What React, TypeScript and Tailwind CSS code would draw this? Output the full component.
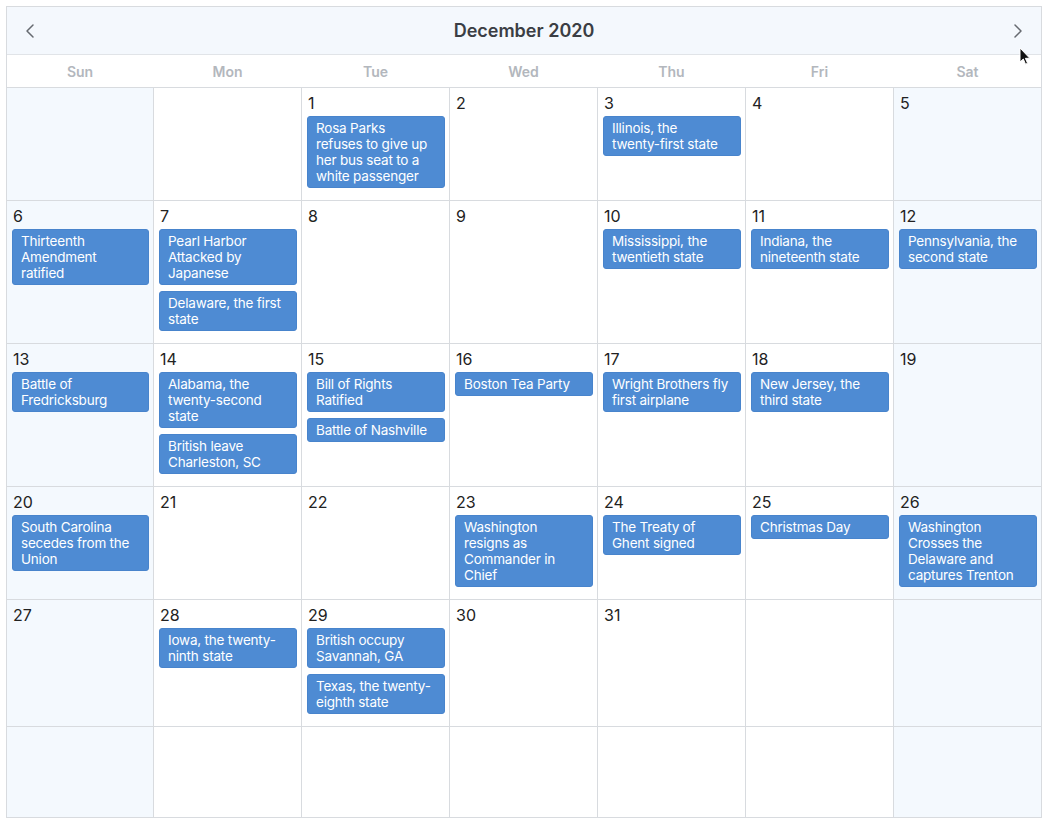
import { ChevronLeft, ChevronRight } from "lucide-react";

interface Day {
  date?: number;
  events?: string[];
}

const WEEKDAYS = ["Sun", "Mon", "Tue", "Wed", "Thu", "Fri", "Sat"];

// line breaks follow the original layout
const ROWS: { height: string; days: Day[] }[] = [
  {
    height: "h-[113px]",
    days: [
      {},
      {},
      { date: 1, events: ["Rosa Parks\nrefuses to give up\nher bus seat to a\nwhite passenger"] },
      { date: 2 },
      { date: 3, events: ["Illinois, the\ntwenty-first state"] },
      { date: 4 },
      { date: 5 },
    ],
  },
  {
    height: "h-[143px]",
    days: [
      { date: 6, events: ["Thirteenth\nAmendment\nratified"] },
      { date: 7, events: ["Pearl Harbor\nAttacked by\nJapanese", "Delaware, the first\nstate"] },
      { date: 8 },
      { date: 9 },
      { date: 10, events: ["Mississippi, the\ntwentieth state"] },
      { date: 11, events: ["Indiana, the\nnineteenth state"] },
      { date: 12, events: ["Pennsylvania, the\nsecond state"] },
    ],
  },
  {
    height: "h-[143px]",
    days: [
      { date: 13, events: ["Battle of\nFredricksburg"] },
      { date: 14, events: ["Alabama, the\ntwenty-second\nstate", "British leave\nCharleston, SC"] },
      { date: 15, events: ["Bill of Rights\nRatified", "Battle of Nashville"] },
      { date: 16, events: ["Boston Tea Party"] },
      { date: 17, events: ["Wright Brothers fly\nfirst airplane"] },
      { date: 18, events: ["New Jersey, the\nthird state"] },
      { date: 19 },
    ],
  },
  {
    height: "h-[113px]",
    days: [
      { date: 20, events: ["South Carolina\nsecedes from the\nUnion"] },
      { date: 21 },
      { date: 22 },
      { date: 23, events: ["Washington\nresigns as\nCommander in\nChief"] },
      { date: 24, events: ["The Treaty of\nGhent signed"] },
      { date: 25, events: ["Christmas Day"] },
      { date: 26, events: ["Washington\nCrosses the\nDelaware and\ncaptures Trenton"] },
    ],
  },
  {
    height: "h-[127px]",
    days: [
      { date: 27 },
      { date: 28, events: ["Iowa, the twenty-\nninth state"] },
      { date: 29, events: ["British occupy\nSavannah, GA", "Texas, the twenty-\neighth state"] },
      { date: 30 },
      { date: 31 },
      {},
      {},
    ],
  },
  {
    height: "h-[90px]",
    days: [{}, {}, {}, {}, {}, {}, {}],
  },
];

function Cursor() {
  return (
    <svg
      className="absolute left-[1019px] top-[41px]"
      width="12"
      height="19"
      viewBox="0 0 12 19"
    >
      <path
        d="M1 1 L1 15 L4.3 12 L6.5 17.2 L8.6 16.3 L6.4 11.3 L10.8 11.3 Z"
        fill="#111"
        stroke="#fff"
        strokeWidth="1"
        strokeLinejoin="round"
      />
    </svg>
  );
}

const COLS = "grid grid-cols-[146px_repeat(6,148px)]";

export default function App() {
  return (
    <div className="relative min-h-[820px] bg-white" style={{ fontFamily: "Inter, 'Liberation Sans', sans-serif" }}>
      <div className="ml-[6px] mt-[6px] w-[1036px] border border-[#d8dbdf]">
        <div className="flex h-[48px] items-center justify-between border-b border-[#e1e4e8] bg-[#f4f8fd] px-[11px]">
          <ChevronLeft size={24} strokeWidth={1.5} className="text-[#666a70]" />
          <span className="text-[18px] font-semibold text-[#3b3e44]">December 2020</span>
          <ChevronRight size={24} strokeWidth={1.5} className="text-[#666a70]" />
        </div>
        <div className={`${COLS} h-[33px] border-b border-[#d8dbdf]`}>
          {WEEKDAYS.map((d, i) => (
            <div
              key={d}
              className={`flex items-center justify-center text-[14px] font-semibold text-[#b3b7bd] ${i > 0 ? "pl-px" : ""}`}
            >
              {d}
            </div>
          ))}
        </div>
        {ROWS.map((row, ri) => (
          <div
            key={ri}
            className={`${COLS} ${row.height} ${ri < ROWS.length - 1 ? "border-b border-[#d8dbdf]" : ""}`}
          >
            {row.days.map((day, di) => {
              const weekend = di === 0 || di === 6;
              return (
                <div
                  key={di}
                  className={`pt-[5px] ${di > 0 ? "border-l border-[#d8dbdf]" : ""} ${
                    weekend ? "bg-[#f4f9fe]" : "bg-white"
                  }`}
                >
                  {day.date && (
                    <div className="pl-[6px] text-[16px] leading-5 text-[#222]">{day.date}</div>
                  )}
                  {day.events && (
                    <div className="mt-[3px] flex flex-col gap-[6px] pl-[5px] pr-[4px]">
                      {day.events.map((ev) => (
                        <div
                          key={ev}
                          className="whitespace-pre rounded-[3px] border border-[#4884cc] bg-[#4e8bd3] px-[8px] pb-[3px] pt-[3px] text-[13.5px] leading-4 tracking-[-0.2px] text-white"
                        >
                          {ev}
                        </div>
                      ))}
                    </div>
                  )}
                </div>
              );
            })}
          </div>
        ))}
      </div>
      <Cursor />
    </div>
  );
}
